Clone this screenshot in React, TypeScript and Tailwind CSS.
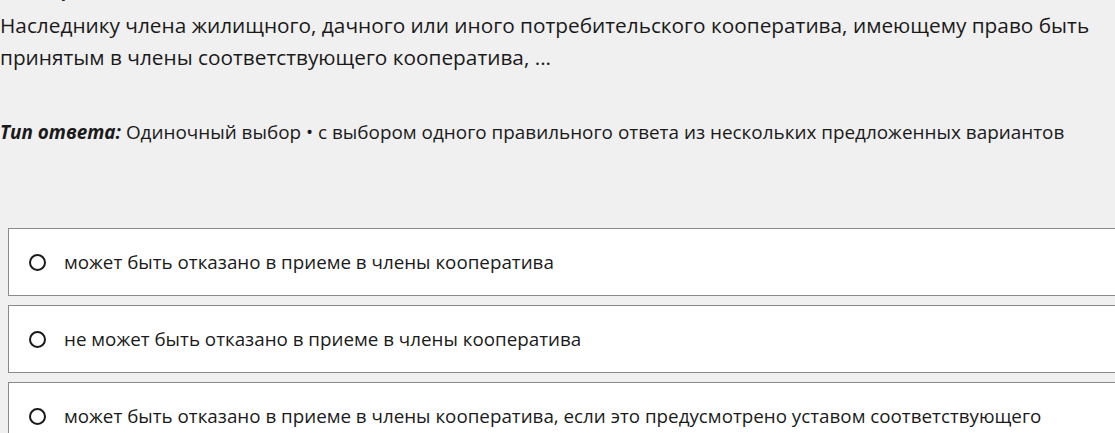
export default function App() {
  const options = [
    'может быть отказано в приеме в члены кооператива',
    'не может быть отказано в приеме в члены кооператива',
    'может быть отказано в приеме в члены кооператива, если это предусмотрено уставом соответствующего',
  ]

  return (
    <div
      className="h-[433px] w-[1115px] overflow-hidden bg-[#f0f0f0] text-[#1a1a1a]"
      style={{ fontFamily: '"Open Sans", "Noto Sans", sans-serif' }}
    >
      {/* question header, scrolled mostly out of view */}
      <div className="-mt-[23px] h-[26px] pl-[30px] text-[18px] font-bold italic leading-[26px] text-[#222]">
        Вопрос 1
      </div>

      {/* question text */}
      <p className="mt-[6px] text-[20.8px] leading-[32px]">
        Наследнику члена жилищного, дачного или иного потребительского кооператива, имеющему право быть
        принятым в члены соответствующего кооператива, ...
      </p>

      {/* answer type */}
      <p className="mt-[46px] text-[18.9px] leading-[26px]">
        <span className="font-bold italic">Тип ответа:</span> Одиночный выбор • с выбором одного правильного
        ответа из нескольких предложенных вариантов
      </p>

      {/* options */}
      <div className="ml-2 mt-[83px] flex flex-col gap-[9px]">
        {options.map((o) => (
          <label
            key={o}
            className="flex h-[68px] w-[1120px] shrink-0 cursor-pointer items-center border border-[#8a8a8a] bg-white pl-[20px]"
          >
            <span className="h-[17px] w-[17px] shrink-0 rounded-full border-2 border-[#1a1a1a]" />
            <span className="ml-[18px] text-[18.8px] leading-[26px]">{o}</span>
          </label>
        ))}
      </div>
    </div>
  )
}
